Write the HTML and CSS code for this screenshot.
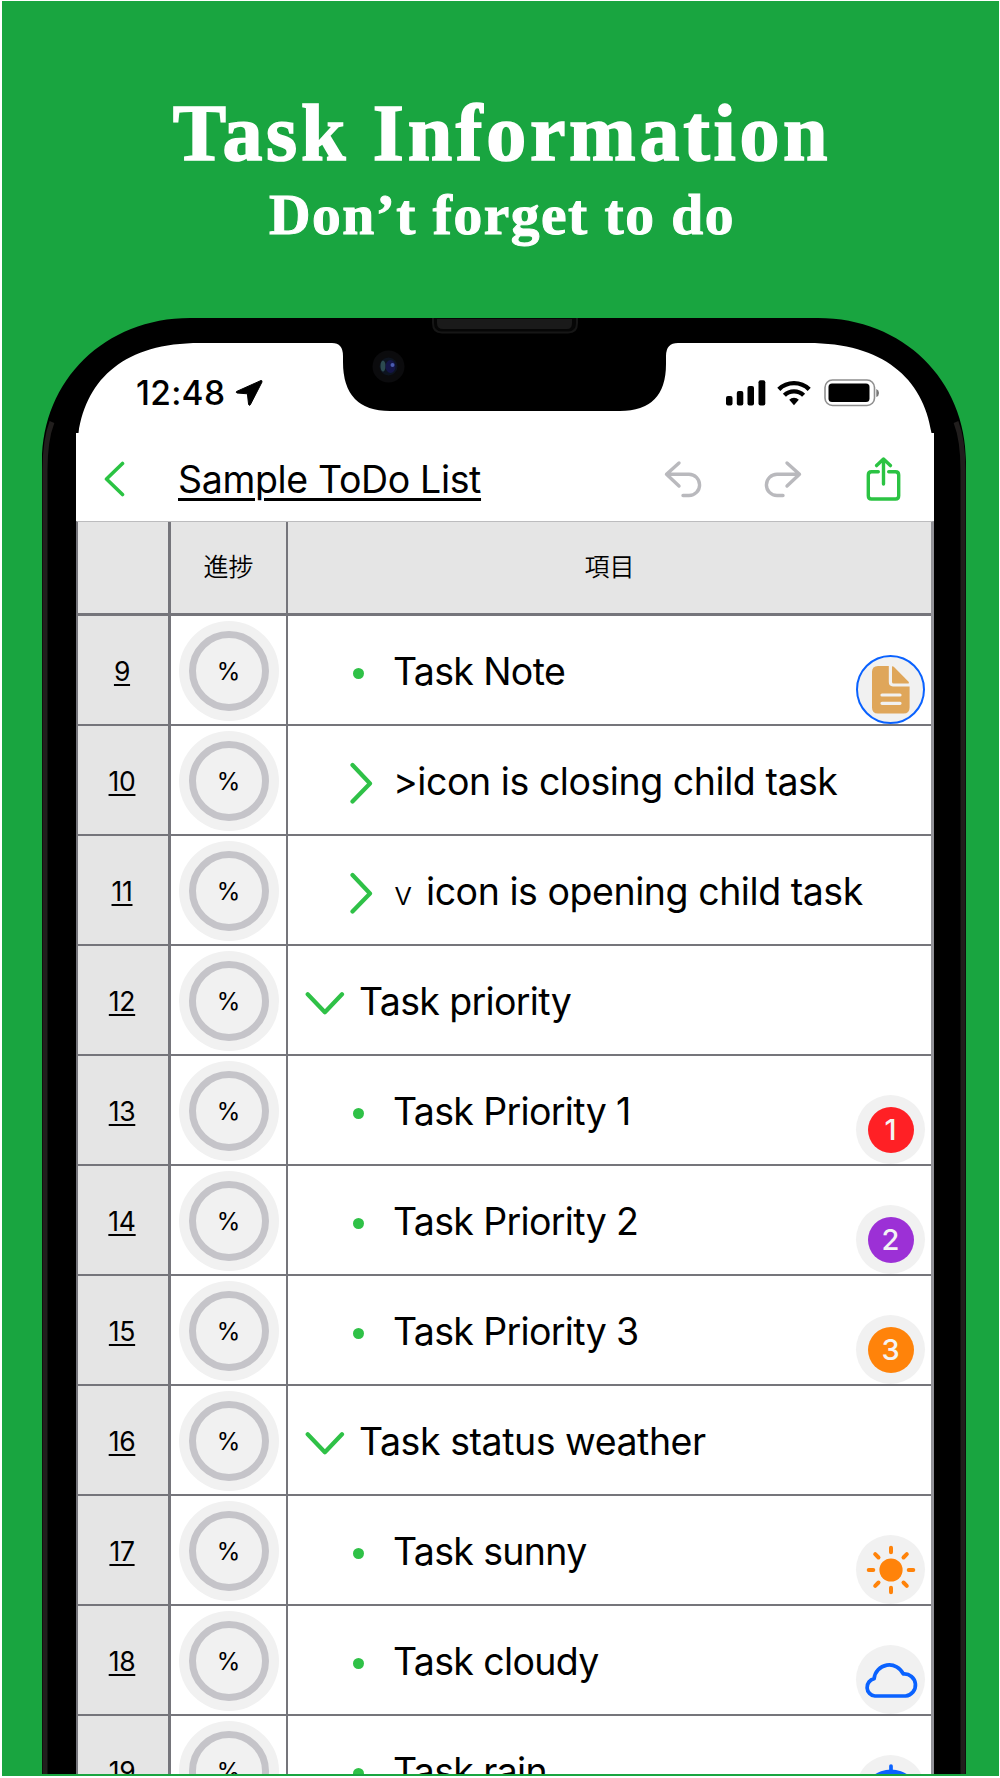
FILE: index.html
```
<!DOCTYPE html>
<html lang="en">
<head>
    <meta charset="UTF-8">
    <meta name="viewport" content="width=device-width, initial-scale=1.0">
    <title>Task Information</title>
    <link rel="stylesheet" href="styles.css">
</head>
<body>
    <svg class="defs">
        <symbol id="chevron-right" viewBox="0 0 24 42">
            <path d="M3.5 3L21 21.5L3.5 39.5" class="line"/>
        </symbol>
        <symbol id="chevron-down" viewBox="0 0 42 24">
            <path d="M3.7 3.2L20.9 21.2L38 3.2" class="line"/>
        </symbol>
    </svg>

    <div class="poster">
        <header class="headline">
            <h1>Task Information</h1>
            <h2>Don’t forget to do</h2>
        </header>

        <div class="phone">
            <div class="screen">
                <div class="status-bar">
                    <span class="time">12:48</span>
                    <svg class="location" viewBox="0 0 28 28"><path d="M26 1.5L1.5 12.5Q0.8 13.5 2 14L12.4 14.8L13.6 25.6Q14.3 27 15.3 25.8L27 3Q27 1 26 1.5Z" stroke="#000"/></svg>
                    <svg class="signal" viewBox="0 0 40 26">
                        <rect x="0" y="16" width="6.5" height="9.5" rx="2"/>
                        <rect x="10.8" y="11" width="6.5" height="14.5" rx="2"/>
                        <rect x="21.5" y="6" width="6.5" height="19.5" rx="2"/>
                        <rect x="32.5" y="0.3" width="6.8" height="25.2" rx="2"/>
                    </svg>
                    <svg class="wifi" viewBox="0 0 34 26">
                        <g fill="none" stroke="#000" stroke-width="4.4">
                            <path d="M1.8 9.3A21.8 21.8 0 0 1 32.2 9.3"/>
                            <path d="M7.4 15.3A13.6 13.6 0 0 1 26.6 15.3"/>
                        </g>
                        <path d="M12.2 19.8A6.8 6.8 0 0 1 21.8 19.8L17 25.2Z"/>
                    </svg>
                    <svg class="battery" viewBox="0 0 56 28">
                        <rect x="1" y="1" width="49.5" height="25.5" rx="7.5" fill="none" stroke="#8f8f8f" stroke-width="1.6"/>
                        <rect x="4.5" y="4.5" width="41" height="18.5" rx="3.5"/>
                        <path d="M52.3 10Q55 11 55 14Q55 17 52.3 18Z" fill="#777"/>
                    </svg>
                </div>

                <nav class="nav-bar">
                    <svg class="back" viewBox="0 0 22 36"><path d="M18.5 2.5L2.5 18L18.5 33.5" class="line"/></svg>
                    <span class="list-title">Sample ToDo List</span>
                    <svg class="undo" viewBox="0 0 38 38"><path d="M15 3L2.5 14.3L15 26M2.5 14.3H25A10.3 10.3 0 0 1 25 35.5H19" class="line"/></svg>
                    <svg class="redo" viewBox="0 0 38 38"><path d="M23 3L35.5 14.3L23 26M35.5 14.3H13A10.3 10.3 0 0 0 13 35.5H19" class="line"/></svg>
                    <svg class="share" viewBox="0 0 36 44"><path d="M12.3 14.7H5.5Q2.3 14.7 2.3 18V38.7Q2.3 42 5.5 42H29.5Q32.7 42 32.7 38.7V18Q32.7 14.7 29.5 14.7H22.7M17.5 27V2.3M10.6 8.6L17.5 2L24.4 8.6" class="line"/></svg>
                </nav>

                <div class="sheet">
                    <div class="row head">
                        <div class="num"></div>
                        <div class="progress">進捗</div>
                        <div class="item">項目</div>
                    </div>
                    <div class="row">
                        <div class="num"><u>9</u></div>
                        <div class="progress"><span class="ring">%</span></div>
                        <div class="item child"><span class="mark dot"></span><span class="label">Task Note</span>
                            <span class="badge note"><svg viewBox="0 0 40 50">
                                <path d="M6 1H17.8V17Q17.8 21.4 22 21.4H38.6V42.5Q38.6 48.5 32.6 48.5H7Q1 48.5 1 42.5V7Q1 1 7 1Z" fill="#dfa65a"/>
                                <path d="M21 1.4Q21.8 0.8 23 2L37.3 16.5Q38.6 18 37.6 18.6H22.5Q21 18.6 21 17Z" fill="#dfa65a"/>
                                <path d="M11 30H29M11 38.3H29" stroke="#f1f1f1" stroke-width="3.2" stroke-linecap="round"/>
                            </svg></span>
                        </div>
                    </div>
                    <div class="row">
                        <div class="num"><u>10</u></div>
                        <div class="progress"><span class="ring">%</span></div>
                        <div class="item child"><svg class="mark right"><use href="#chevron-right"/></svg><span class="label wide">&gt;icon is closing child task</span></div>
                    </div>
                    <div class="row">
                        <div class="num"><u>11</u></div>
                        <div class="progress"><span class="ring">%</span></div>
                        <div class="item child"><svg class="mark right"><use href="#chevron-right"/></svg><span class="label wide"><span class="vee">v</span>icon is opening child task</span></div>
                    </div>
                    <div class="row">
                        <div class="num"><u>12</u></div>
                        <div class="progress"><span class="ring">%</span></div>
                        <div class="item"><svg class="mark down"><use href="#chevron-down"/></svg><span class="label">Task priority</span></div>
                    </div>
                    <div class="row">
                        <div class="num"><u>13</u></div>
                        <div class="progress"><span class="ring">%</span></div>
                        <div class="item child"><span class="mark dot"></span><span class="label">Task Priority 1</span><span class="badge"><b class="red">1</b></span></div>
                    </div>
                    <div class="row">
                        <div class="num"><u>14</u></div>
                        <div class="progress"><span class="ring">%</span></div>
                        <div class="item child"><span class="mark dot"></span><span class="label">Task Priority 2</span><span class="badge"><b class="purple">2</b></span></div>
                    </div>
                    <div class="row">
                        <div class="num"><u>15</u></div>
                        <div class="progress"><span class="ring">%</span></div>
                        <div class="item child"><span class="mark dot"></span><span class="label">Task Priority 3</span><span class="badge"><b class="orange">3</b></span></div>
                    </div>
                    <div class="row">
                        <div class="num"><u>16</u></div>
                        <div class="progress"><span class="ring">%</span></div>
                        <div class="item"><svg class="mark down"><use href="#chevron-down"/></svg><span class="label wide">Task status weather</span></div>
                    </div>
                    <div class="row">
                        <div class="num"><u>17</u></div>
                        <div class="progress"><span class="ring">%</span></div>
                        <div class="item child"><span class="mark dot"></span><span class="label">Task sunny</span>
                            <span class="badge"><svg viewBox="-34 -34 68 68">
                                <circle r="11.6" fill="#ff830a"/>
                                <path d="M0-22.3V-17.7M0 22.3V17.7M-22.3 0H-17.7M22.3 0H17.7M-15.8-15.8L-12.5-12.5M15.8-15.8L12.5-12.5M-15.8 15.8L-12.5 12.5M15.8 15.8L12.5 12.5" stroke="#ff830a" stroke-width="4" stroke-linecap="round"/>
                            </svg></span>
                        </div>
                    </div>
                    <div class="row">
                        <div class="num"><u>18</u></div>
                        <div class="progress"><span class="ring">%</span></div>
                        <div class="item child"><span class="mark dot"></span><span class="label">Task cloudy</span>
                            <span class="badge"><svg viewBox="-34 -34 68 68">
                                <path d="M-16 16H14.5A11 11 0 0 0 12.3-6A15.3 15.3 0 0 0-16.9-1.2A8.7 8.7 0 0 0-16 16Z" fill="none" stroke="#0a62ff" stroke-width="3.7" stroke-linejoin="round"/>
                            </svg></span>
                        </div>
                    </div>
                    <div class="row">
                        <div class="num"><u>19</u></div>
                        <div class="progress"><span class="ring">%</span></div>
                        <div class="item child"><span class="mark dot"></span><span class="label">Task rain</span>
                            <span class="badge"><svg viewBox="-34 -34 68 68">
                                <path d="M0-24V-19" stroke="#0a62ff" stroke-width="3.7" stroke-linecap="round"/>
                                <path d="M-26 2A26 22.5 0 0 1 26 2Z" fill="#0a62ff"/>
                            </svg></span>
                        </div>
                    </div>
                </div>
            </div>

            <!-- bezel, notch, speaker and camera, drawn over the screen -->
            <svg class="bezel" viewBox="42 318 924 1456">
                <path fill-rule="evenodd" d="M42 1774V462C42 380 105 318 190 318H818C903 318 966 380 966 462V1774H934V433H931.5C923 378 883 343 808 343H678Q666 343 666 356V364Q666 411 620 411H390Q343 411 343 362V356Q343 343 332 343H200C125 343 87 378 78.5 433H76V1774Z"/>
                <path d="M45 1774V470Q45 440 52 422M963 1774V470Q963 440 956 422" fill="none" stroke="#211e1d" stroke-width="5"/>
                <path d="M433 318V323Q433 332.500 442 332.500H568Q577 332.500 577 323V318" fill="#060606" stroke="#161616" stroke-width="2"/>
                <path d="M437 319V323Q437 329 443 329H567Q572 329 572 323V319Z" fill="#1a1a1a"/>
                <circle cx="388.5" cy="366.5" r="16" fill="#0b0b0d"/>
                <circle cx="388.5" cy="366.5" r="9" fill="#0d1420"/>
                <ellipse cx="383" cy="366" rx="2.5" ry="5.5" fill="#2c4a50"/>
                <ellipse cx="390.5" cy="366.5" rx="5" ry="6.5" fill="#141548"/>
                <circle cx="392.5" cy="365" r="2" fill="#4a5cb0"/>
            </svg>
        </div>
    </div>
</body>
</html>
```
FILE: styles.css
```
* {
    margin: 0;
    padding: 0;
    box-sizing: border-box;
}

body {
    font-family: Inter, "Noto Sans CJK JP", sans-serif;
    color: #000;
}

svg {
    display: block;
    flex-shrink: 0;
}

.defs {
    position: absolute;
    width: 0;
    height: 0;
}

.line {
    fill: none;
    stroke: currentColor;
    stroke-linecap: round;
    stroke-linejoin: round;
}

.poster {
    width: 1000px;
    height: 1778px;
    background: #19a540;
    border: solid #fff;
    border-width: 1px 1px 2px 2px;
    overflow: hidden;
}

.headline {
    height: 317px;
    padding: 87px 0 0 3px;
    text-align: center;
    color: #fff;
    font-family: "Liberation Serif", serif;
}

.headline h1 {
    font-size: 80px;
    line-height: 90px;
    letter-spacing: 3.7px;
    -webkit-text-stroke: 1.6px #fff;
}

.headline h2 {
    padding-top: 2px;
    font-size: 57.5px;
    line-height: 70px;
    letter-spacing: 1.5px;
    -webkit-text-stroke: 1px #fff;
}

.phone {
    position: relative;
    width: 924px;
    height: 1456px;
    margin-left: 40px;
    padding: 25px 32px 0 34px;
    overflow: hidden;
}

.bezel {
    position: absolute;
    top: 0;
    left: 0;
    width: 924px;
    height: 1456px;
}

.screen {
    height: 1431px;
    background: #fff;
    border-radius: 90px 90px 0 0;
}

.status-bar {
    display: flex;
    align-items: center;
    height: 98px;
    padding: 2px 0 0 60px;
}

.time {
    width: 98px;
    font-size: 33.5px;
    font-weight: 500;
    letter-spacing: 0.3px;
}

.location {
    width: 28px;
    height: 28px;
    margin-left: 1px;
}

.signal {
    width: 40px;
    height: 26px;
    margin-left: 463px;
}

.wifi {
    width: 34px;
    height: 26px;
    margin-left: 11px;
}

.battery {
    width: 56px;
    height: 28px;
    margin-left: 13px;
}

.nav-bar {
    display: flex;
    align-items: center;
    height: 80px;
    padding-left: 28px;
    padding-bottom: 4px;
    color: #b9b9bd;
}

.back {
    width: 22px;
    height: 36px;
    color: #2bc343;
    stroke-width: 3.6;
}

.list-title {
    width: 486px;
    margin-left: 52px;
    color: #000;
    font-size: 37.5px;
    letter-spacing: -0.35px;
    text-decoration: underline;
    text-decoration-thickness: 2.5px;
    text-underline-offset: 5px;
}

.undo,
.redo {
    width: 38px;
    height: 38px;
    stroke-width: 3.4;
}

.redo {
    margin-left: 62px;
}

.share {
    width: 36px;
    height: 44px;
    margin-left: 64px;
    color: #2bc343;
    stroke-width: 3.4;
}

.sheet {
    height: 1253px;
    border-left: 2px solid #75757b;
    border-right: 3px solid #929298;
    border-top: 1px solid #bcbcbe;
    overflow: hidden;
}

.row {
    display: grid;
    grid-template-columns: 93px 117px 1fr;
    height: 110px;
}

.row > div {
    display: flex;
    border-bottom: 2px solid #75757b;
}

.num {
    justify-content: center;
    padding: 37px 2px 0 0;
    background: #e5e5e5;
    border-right: 3px solid #75757b;
    font-size: 26.5px;
    line-height: 36px;
    letter-spacing: -0.3px;
}

.num u {
    height: 36px;
    text-decoration-thickness: 2px;
    text-underline-offset: 3px;
}

.progress {
    justify-content: center;
    border-right: 2px solid #75757b;
}

.ring {
    display: flex;
    align-items: center;
    justify-content: center;
    width: 80px;
    height: 80px;
    margin-top: 15px;
    border: 7.5px solid #c5c4c9;
    border-radius: 50%;
    background: #f1f1f1;
    box-shadow: 0 0 0 10px #f1f1f1;
    font-size: 24px;
}

.row.head {
    height: 94px;
}

.head > div {
    align-items: center;
    justify-content: center;
    padding-top: 0;
    padding-bottom: 5px;
    background: #e5e5e5;
    border-bottom-width: 3px;
    font-size: 25px;
    font-weight: 350;
}

.item {
    position: relative;
    padding-left: 16px;
}

.item.child {
    padding-left: 60px;
}

.head .item {
    padding-left: 0;
}

.mark {
    flex-shrink: 0;
    color: #2fc147;
    stroke-width: 4.2;
}

.dot {
    width: 11px;
    height: 11px;
    margin: 52px 29px 0 5px;
    border-radius: 50%;
    background: #2fc147;
}

.right {
    width: 24px;
    height: 42px;
    margin: 36px 20px 0 1px;
}

.down {
    width: 42px;
    height: 24px;
    margin: 45px 13px 0 0;
}

.label {
    height: 46px;
    margin-top: 33px;
    font-size: 37.5px;
    line-height: 46px;
    letter-spacing: -0.65px;
    white-space: nowrap;
}

.label.wide {
    letter-spacing: -0.45px;
}

.vee {
    display: inline-block;
    width: 33px;
    padding-left: 1px;
    font-size: 33px;
    font-weight: 300;
}

.badge {
    position: absolute;
    right: 6px;
    bottom: 0;
    display: flex;
    align-items: center;
    justify-content: center;
    width: 69px;
    height: 69px;
    border-radius: 50%;
    background: #f1f1f1;
}

.badge svg {
    width: 68px;
    height: 68px;
}

.badge.note {
    border: 2.5px solid #0a62ff;
}

.badge.note svg {
    width: 40px;
    height: 50px;
}

.badge b {
    width: 46px;
    height: 46px;
    border-radius: 50%;
    color: #f4f4f4;
    font-size: 29px;
    font-weight: 500;
    line-height: 46px;
    text-align: center;
}

.red {
    background: #ff2025;
}

.purple {
    background: #9c30d6;
}

.orange {
    background: #ff830a;
}
```
